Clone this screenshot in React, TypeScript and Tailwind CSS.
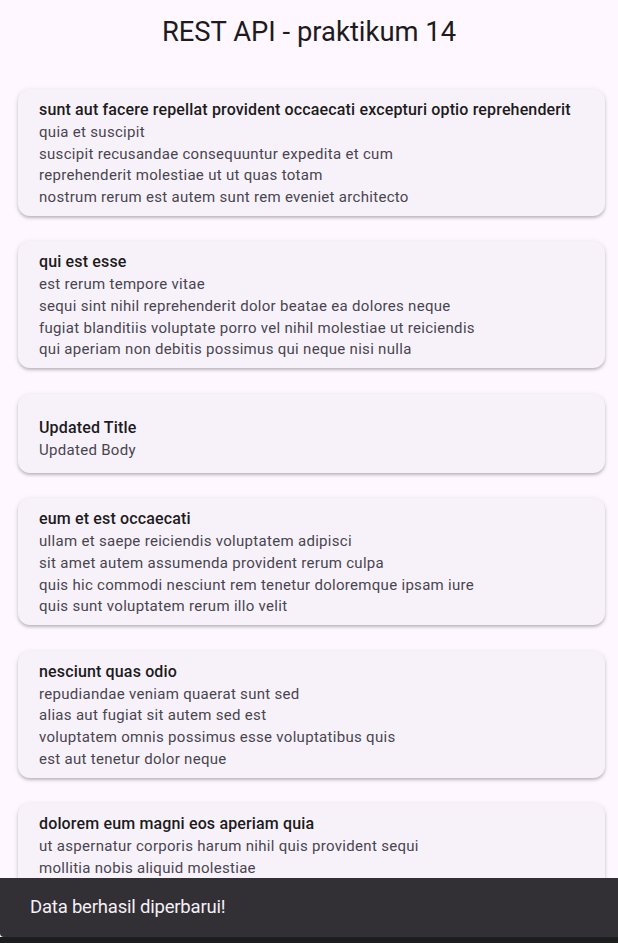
import React from "react";

type Post = { title: string; body: string[]; pt?: string; h?: string };

const posts: Post[] = [
  {
    title: "sunt aut facere repellat provident occaecati excepturi optio reprehenderit",
    body: [
      "quia et suscipit",
      "suscipit recusandae consequuntur expedita et cum",
      "reprehenderit molestiae ut ut quas totam",
      "nostrum rerum est autem sunt rem eveniet architecto",
    ],
  },
  {
    title: "qui est esse",
    body: [
      "est rerum tempore vitae",
      "sequi sint nihil reprehenderit dolor beatae ea dolores neque",
      "fugiat blanditiis voluptate porro vel nihil molestiae ut reiciendis",
      "qui aperiam non debitis possimus qui neque nisi nulla",
    ],
  },
  { title: "Updated Title", body: ["Updated Body"], pt: "pt-[22px]", h: "h-[79px]" },
  {
    title: "eum et est occaecati",
    body: [
      "ullam et saepe reiciendis voluptatem adipisci",
      "sit amet autem assumenda provident rerum culpa",
      "quis hic commodi nesciunt rem tenetur doloremque ipsam iure",
      "quis sunt voluptatem rerum illo velit",
    ],
  },
  {
    title: "nesciunt quas odio",
    body: [
      "repudiandae veniam quaerat sunt sed",
      "alias aut fugiat sit autem sed est",
      "voluptatem omnis possimus esse voluptatibus quis",
      "est aut tenetur dolor neque",
    ],
  },
  {
    title: "dolorem eum magni eos aperiam quia",
    body: [
      "ut aspernatur corporis harum nihil quis provident sequi",
      "mollitia nobis aliquid molestiae",
    ],
  },
];

export default function App() {
  return (
    <div
      className="relative h-[943px] w-[618px] overflow-hidden bg-[#fef7ff]"
      style={{ fontFamily: "Roboto, 'Noto Sans', sans-serif" }}
    >
      <div className="flex h-[64px] items-center justify-center pt-[2px]">
        <h1 className="text-[27.4px] font-normal leading-none text-[#1d1b20]">REST API - praktikum 14</h1>
      </div>
      <div className="flex flex-col gap-[25.4px] pl-[18px] pr-[13px] pt-[25px]">
        {posts.map((p, i) => (
          <div
            key={i}
            className={`rounded-[12px] bg-[#f7f2fa] pl-[21px] pr-[16px] shadow-[0_2px_3px_rgba(0,0,0,0.22),0_1px_6px_rgba(0,0,0,0.08)] ${p.pt ?? "pt-[9px]"} ${p.h ?? "h-[127px]"}`}
          >
            <div className="text-[16px] font-medium leading-[24px] tracking-[0.15px] text-[#1d1b20]">{p.title}</div>
            {p.body.map((b, j) => (
              <div key={j} className="text-[15px] leading-[21.67px] tracking-[0.3px] text-[#49454f]">
                {b}
              </div>
            ))}
          </div>
        ))}
      </div>
      <div className="absolute bottom-[6px] left-0 right-0 flex h-[59px] items-center rounded-bl-[4px] bg-[#322f35] pl-[30px]">
        <span className="text-[18.5px] leading-none tracking-[-0.2px] text-[#f5eff7]">Data berhasil diperbarui!</span>
      </div>
      <div className="absolute bottom-0 left-0 right-0 h-[6px] bg-[#1b1d1f]" />
    </div>
  );
}
